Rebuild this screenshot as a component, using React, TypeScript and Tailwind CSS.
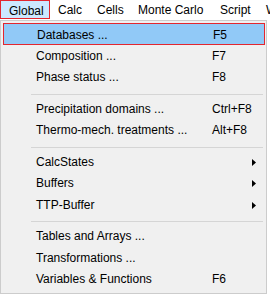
const menus = [
  { label: "Global", w: "w-[50px]", active: true },
  { label: "Calc", w: "w-[39px]" },
  { label: "Cells", w: "w-[41px]" },
  { label: "Monte Carlo", w: "w-[82px]" },
  { label: "Script", w: "w-[46px]" },
  { label: "Window", w: "w-auto" },
];

type Item = { label: string; key?: string; sub?: boolean; hot?: boolean } | "sep";

const items: Item[] = [
  { label: "Databases ...", key: "F5", hot: true },
  { label: "Composition ...", key: "F7" },
  { label: "Phase status ...", key: "F8" },
  "sep",
  { label: "Precipitation domains ...", key: "Ctrl+F8" },
  { label: "Thermo-mech. treatments ...", key: "Alt+F8" },
  "sep",
  { label: "CalcStates", sub: true },
  { label: "Buffers", sub: true },
  { label: "TTP-Buffer", sub: true },
  "sep",
  { label: "Tables and Arrays ..." },
  { label: "Transformations ..." },
  { label: "Variables & Functions", key: "F6" },
];

function Arrow() {
  return (
    <svg width="4" height="7" viewBox="0 0 4 7" className="ml-auto mr-[9px] shrink-0">
      <path d="M0 0 L4 3.5 L0 7 Z" fill="#000" />
    </svg>
  );
}

export default function App() {
  return (
    <div className="h-[295px] w-[270px] overflow-hidden bg-white text-[12px] text-black [font-family:'Liberation_Sans',Arial,sans-serif]">
      {/* menu bar */}
      <div className="flex h-[20px] whitespace-nowrap">
        {menus.map((m) => (
          <div
            key={m.label}
            className={`${m.w} h-[19px] shrink-0 px-[8px] leading-[20px] ${
              m.active ? "border border-[#e3262f] bg-[#cce8ff] px-[7px] leading-[18px]" : ""
            }`}
          >
            {m.label}
          </div>
        ))}
      </div>

      {/* dropdown */}
      <div className="w-[267px] border border-[#cccccc] bg-[#f0f0f0] pb-[3px] pl-[2px] pr-[1px] pt-[2px]">
        {items.map((it, i) =>
          it === "sep" ? (
            <div key={i} className="h-[10px] pt-[6px]">
              <div className="ml-[28px] mr-[2px] h-px bg-[#d5d5d5]" />
            </div>
          ) : (
            <div
              key={i}
              className={`flex h-[21.5px] items-start whitespace-nowrap pl-[33px] pt-[2px] leading-[19.5px] ${
                it.hot ? "border border-[#e3262f] bg-[#91c9f7] pl-[32px] pt-[1px]" : ""
              }`}
            >
              <span className="w-[176px] shrink-0">{it.label}</span>
              {it.key && <span>{it.key}</span>}
              {it.sub && (
                <div className="ml-auto flex h-[19.5px] items-center">
                  <Arrow />
                </div>
              )}
            </div>
          )
        )}
      </div>
    </div>
  );
}
